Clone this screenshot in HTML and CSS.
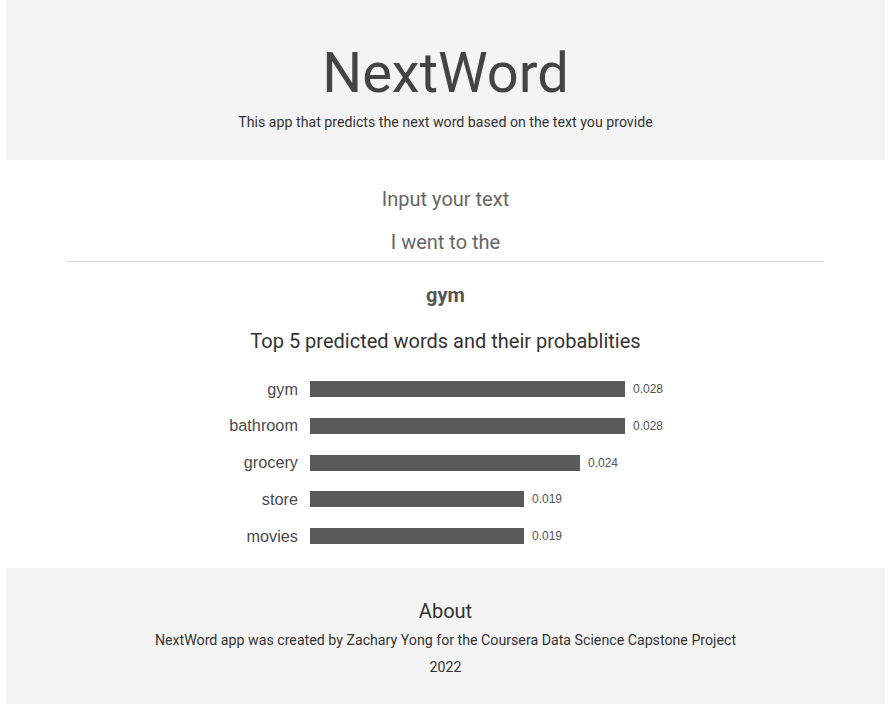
FILE: index.html
```html
<!DOCTYPE html>
<html>
<head>
<meta charset="utf-8">
<link rel="stylesheet" href="styles.css">
</head>
<body>
<div class="page">
  <header class="panel header">
    <h1 class="title">NextWord</h1>
    <p class="subtitle">This app that predicts the next word based on the text you provide</p>
  </header>
  <main class="main">
    <h3 class="label">Input your text</h3>
    <div class="input">I went to the</div>
    <div class="prediction">gym</div>
    <h3 class="chart-title">Top 5 predicted words and their probablities</h3>
    <div class="chart">
      <div class="row"><span class="word">gym</span><span class="bar" style="width:315px"></span><span class="val">0.028</span></div>
      <div class="row"><span class="word">bathroom</span><span class="bar" style="width:315px"></span><span class="val">0.028</span></div>
      <div class="row"><span class="word">grocery</span><span class="bar" style="width:270px"></span><span class="val">0.024</span></div>
      <div class="row"><span class="word">store</span><span class="bar" style="width:214px"></span><span class="val">0.019</span></div>
      <div class="row"><span class="word">movies</span><span class="bar" style="width:214px"></span><span class="val">0.019</span></div>
    </div>
  </main>
  <footer class="panel footer">
    <h3 class="about">About</h3>
    <p class="ftext">NextWord app was created by Zachary Yong for the Coursera Data Science Capstone Project</p>
    <p class="ftext year">2022</p>
  </footer>
</div>
</body>
</html>
```
FILE: styles.css
```css
html, body {
  margin: 0;
  padding: 0;
  background: #fff;
}
body {
  font-family: Roboto, "Liberation Sans", sans-serif;
  color: #333;
}
.page {
  padding: 0 5px 0 6px;
}
.panel {
  background: #f4f4f4;
  text-align: center;
}
.header {
  height: 160px;
  box-sizing: border-box;
  padding-top: 38px;
}
.title {
  margin: 0;
  font-size: 56px;
  font-weight: 400;
  line-height: 70px;
  color: #444;
}
.subtitle {
  margin: 4px 0 0;
  font-size: 14.2px;
  line-height: 20px;
  color: #333;
}
.main {
  text-align: center;
  height: 408px;
  box-sizing: border-box;
  padding-top: 26px;
}
.label {
  margin: 0;
  font-size: 20px;
  font-weight: 400;
  line-height: 26px;
  color: #666;
}
.input {
  margin: 17px 61px 0 61px;
  font-size: 20px;
  line-height: 26px;
  color: #666;
  padding-bottom: 6px;
  border-bottom: 1px solid #ddd;
}
.prediction {
  margin-top: 20px;
  font-size: 20px;
  font-weight: 700;
  line-height: 26px;
  color: #555;
}
.chart-title {
  margin: 20px 0 0;
  font-size: 20px;
  font-weight: 400;
  line-height: 26px;
  color: #333;
}
.chart {
  margin-top: 27px;
  display: flex;
  flex-direction: column;
  gap: 20.75px;
}
.row {
  display: flex;
  align-items: center;
  height: 16px;
}
.word {
  width: 292px;
  text-align: right;
  font-family: "Liberation Sans", Arial, sans-serif;
  font-size: 16.3px;
  color: #4a4a4a;
  padding-right: 12px;
  box-sizing: content-box;
}
.bar {
  display: block;
  height: 16px;
  background: #595959;
}
.val {
  margin-left: 8px;
  font-family: "Liberation Sans", Arial, sans-serif;
  font-size: 12px;
  color: #555;
}
.footer {
  height: 136px;
  box-sizing: border-box;
  padding-top: 30px;
}
.about {
  margin: 0;
  font-size: 20px;
  font-weight: 400;
  line-height: 26px;
  color: #333;
}
.ftext {
  margin: 6px 0 0;
  font-size: 14.2px;
  line-height: 20px;
  color: #333;
}
.year {
  margin-top: 7px;
}
```
